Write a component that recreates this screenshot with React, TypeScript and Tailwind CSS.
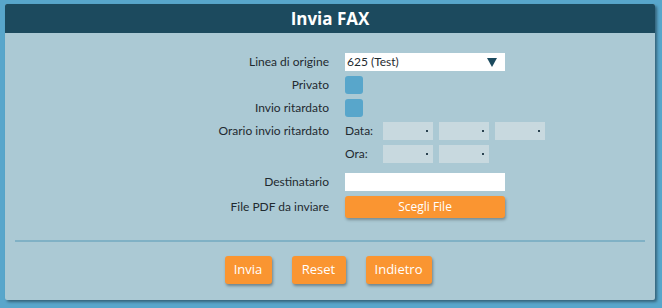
const font = { fontFamily: '"Open Sans", "Noto Sans", sans-serif' };
const labelFont = { fontFamily: 'Lato, "Open Sans", sans-serif' };

function MiniSelect() {
  return (
    <div className="relative h-[18px] w-[50px] bg-[#c8d9df]">
      <span className="absolute right-[5px] top-[8px] h-[2px] w-[2px] bg-[#2b4350]" />
    </div>
  );
}

function Row({ label, children, className = "" }: { label: string; children?: React.ReactNode; className?: string }) {
  return (
    <div className={"flex h-[18px] items-center leading-[18px] " + className}>
      <div className="w-[324px] text-right text-[12px] text-[#1f2a30]" style={labelFont}>
        {label}
      </div>
      <div className="ml-[16px] flex items-center">{children}</div>
    </div>
  );
}

function Btn({ children, w }: { children: string; w: string }) {
  return (
    <button
      className={
        "h-[28px] rounded-[3px] bg-[#fa9531] text-[13px] text-white shadow-[1px_2px_3px_rgba(0,0,0,0.35)] " + w
      }
    >
      {children}
    </button>
  );
}

export default function App() {
  return (
    <div className="h-[308px] w-[662px] bg-[#58a6cb] pl-[5px] pt-[4px]" style={font}>
      <div className="h-[296px] w-[650px] rounded-[2px] bg-[#abc9d4] shadow-[2px_2px_3px_rgba(0,0,0,0.4)]">
        <div className="flex h-[29px] items-center justify-center rounded-t-[2px] bg-[#1c4a5e]">
          <span className="text-[17px] font-bold text-white">Invia FAX</span>
        </div>

        <div className="flex flex-col pt-[20px]">
          <Row label="Linea di origine">
            <div
              className="flex h-[18px] w-[160px] items-center justify-between bg-white pl-[2px] pr-[8px] text-[12px] text-[#1f2a30]"
              style={labelFont}
            >
              <span>625 (Test)</span>
              <svg width="10" height="10" viewBox="0 0 10 10">
                <polygon points="0,1 10,1 5,10" fill="#1c4a5e" />
              </svg>
            </div>
          </Row>
          <Row label="Privato" className="mt-[5px]">
            <div className="h-[18px] w-[18px] rounded-[3px] bg-[#58a6cb]" />
          </Row>
          <Row label="Invio ritardato" className="mt-[5px]">
            <div className="h-[18px] w-[18px] rounded-[3px] bg-[#58a6cb]" />
          </Row>
          <Row label="Orario invio ritardato" className="mt-[5px]">
            <span className="w-[38px] text-[12px] text-[#1f2a30]" style={labelFont}>
              Data:
            </span>
            <div className="flex gap-[6px]">
              <MiniSelect />
              <MiniSelect />
              <MiniSelect />
            </div>
          </Row>
          <Row label="" className="mt-[5px]">
            <span className="w-[38px] text-[12px] text-[#1f2a30]" style={labelFont}>
              Ora:
            </span>
            <div className="flex gap-[6px]">
              <MiniSelect />
              <MiniSelect />
            </div>
          </Row>
          <Row label="Destinatario" className="mt-[10px]">
            <div className="h-[18px] w-[160px] bg-white" />
          </Row>
          <div className="mt-[5px] flex h-[22px] items-center leading-[18px]">
            <div className="w-[324px] text-right text-[12px] text-[#1f2a30]" style={labelFont}>
              File PDF da inviare
            </div>
            <button className="ml-[16px] h-[22px] w-[160px] rounded-[3px] bg-[#fa9531] text-[12px] text-white shadow-[1px_2px_3px_rgba(0,0,0,0.3)]">
              Scegli File
            </button>
          </div>
        </div>

        <div className="mx-[10px] mt-[22px] h-[2px] bg-[#80b1c5]" />

        <div className="mt-[14px] flex justify-center gap-[20px] pr-[4px]">
          <Btn w="w-[47px]">Invia</Btn>
          <Btn w="w-[54px]">Reset</Btn>
          <Btn w="w-[66px]">Indietro</Btn>
        </div>
      </div>
    </div>
  );
}
